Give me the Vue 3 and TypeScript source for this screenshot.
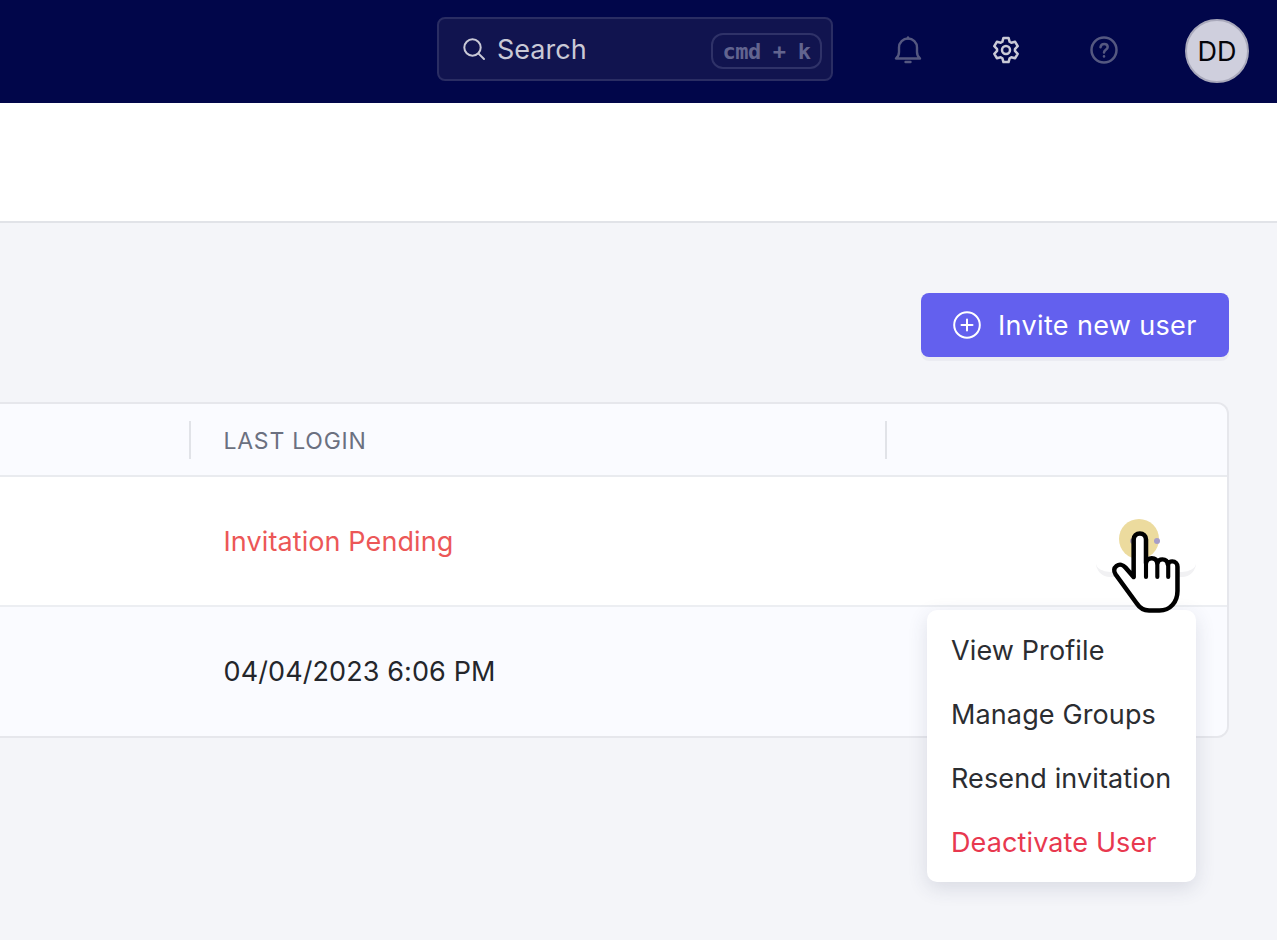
<script setup lang="ts">
const menu: { label: string; danger?: boolean }[] = [
  { label: 'View Profile' },
  { label: 'Manage Groups' },
  { label: 'Resend invitation' },
  { label: 'Deactivate User', danger: true },
]
</script>

<template>
  <div class="page">
    <header class="topbar">
      <div class="search">
        <svg class="search-icon" viewBox="0 0 24 24" fill="none" stroke="currentColor" stroke-width="2" stroke-linecap="round"><circle cx="10.5" cy="10.5" r="8.2" /><path d="M16.6 16.6L22 22" /></svg>
        <span class="search-label">Search</span>
        <kbd class="kbd">cmd + k</kbd>
      </div>
      <div class="icons">
        <svg class="icon dim" viewBox="0 0 28 28" fill="none" stroke="currentColor" stroke-width="2.4" stroke-linecap="round" stroke-linejoin="round"><path d="M2 22.5h24c-2.2-1.6-3-3.6-3-6.5v-4.5a9 9 0 0 0-18 0V16c0 2.900-.8 4.900-3 6.500z" /><path d="M11.500 26h5" /><path d="M14 1.500v1" /></svg>
        <svg class="icon bright" viewBox="0 0 28 28" fill="none" stroke="currentColor" stroke-width="2.500" stroke-linecap="round" stroke-linejoin="round"><path d="M10.340 5.780L11.440 1.970H16.560L17.660 5.780L19.290 6.720L23.140 5.770L25.700 10.200L22.950 13.060V14.940L25.700 17.800L23.140 22.230L19.290 21.280L17.660 22.220L16.560 26.030H11.440L10.340 22.220L8.710 21.280L4.860 22.230L2.300 17.800L5.050 14.940V13.060L2.300 10.200L4.860 5.770L8.710 6.720z" /><circle cx="14" cy="14" r="4" /></svg>
        <svg class="icon dim" viewBox="0 0 28 28" fill="none" stroke="currentColor" stroke-width="2.500" stroke-linecap="round" stroke-linejoin="round"><circle cx="14" cy="14" r="12.500" /><path d="M10.500 11.200c.3-2 1.800-3.200 3.700-3.200 2 0 3.500 1.300 3.500 3 0 2.700-3.700 2.800-3.700 5.500" /><path d="M14 20.300v.2" /></svg>
      </div>
      <div class="avatar">DD</div>
    </header>

    <div class="subbar"></div>

    <main class="content">
      <div class="actions">
        <button class="invite" type="button">
          <svg class="invite-icon" viewBox="0 0 28 28" fill="none" stroke="currentColor" stroke-width="2" stroke-linecap="round"><circle cx="14" cy="14" r="12.800" /><path d="M14 8.500v11M8.500 14h11" /></svg>
          <span>Invite new user</span>
        </button>
      </div>

      <div class="table-wrap">
        <div class="table">
          <div class="row head">
            <div class="cell first"></div>
            <div class="cell login"><span class="divider"></span>LAST LOGIN</div>
            <div class="cell action"><span class="divider"></span></div>
          </div>
          <div class="row body white">
            <div class="cell first"></div>
            <div class="cell login pending">Invitation Pending</div>
            <div class="cell action"></div>
          </div>
          <div class="row body tint">
            <div class="cell first"></div>
            <div class="cell login">04/04/2023 6:06 PM</div>
            <div class="cell action"></div>
          </div>
        </div>

        <div class="kebab">
          <span class="halo"></span>
          <span class="dot d1"></span>
          <span class="dot d2"></span>
          <span class="dot d3"></span>
        </div>

        <ul class="menu">
          <li v-for="item in menu" :key="item.label" :class="{ danger: item.danger }">{{ item.label }}</li>
        </ul>

        <svg class="cursor" viewBox="0 0 70 86" preserveAspectRatio="none" fill="none">
          <path d="M23 8.500c0-3.600 2.700-6 6-6s6 2.400 6 6V32c.4-3 2.900-4.800 5.600-4.800 2.900 0 5 1.900 5.400 4.800.7-2.300 2.800-3.600 5-3.600 2.800 0 4.800 1.900 5.200 4.700.8-1.700 2.500-2.700 4.300-2.700 3 0 5.100 2.300 5.100 5.300v24.300c0 11-7 19.500-17.500 19.500H38c-5.600 0-9.200-2.600-12.300-7.500L5.500 43.500c-2.300-3.500-1.500-6.700.8-8.500 2.900-2.200 6.300-1.400 8.700 1.500l8 9.500z" fill="#fff" stroke="#000" stroke-width="4.400" stroke-linejoin="round" />
          <path d="M35 32v14M46 32v14M56.600 33v13" stroke="#000" stroke-width="4" stroke-linecap="round" />
        </svg>
      </div>
    </main>
  </div>
</template>

<style scoped>
.page {
  display: flex;
  flex-direction: column;
  width: 1277px;
  height: 940px;
  overflow: hidden;
  background: #f4f5f9;
  font-family: Inter, "Liberation Sans", sans-serif;
  color: #24262b;
}
.topbar {
  flex: 0 0 103px;
  box-sizing: border-box;
  display: flex;
  align-items: center;
  justify-content: flex-end;
  padding: 0 28px 0 0;
  background: #01064a;
}
.search {
  box-sizing: border-box;
  display: flex;
  align-items: center;
  width: 396px;
  height: 64px;
  margin-top: -6px;
  padding: 0 9px 0 23px;
  background: #11144f;
  border: 2px solid #2a2d63;
  border-radius: 8px;
  color: #c9c9d6;
}
.search-icon { width: 24px; height: 24px; margin-right: 11px; }
.search-label { font-size: 27px; flex: 1; margin-top: 2px; }
.kbd {
  box-sizing: border-box;
  display: flex;
  align-items: center;
  justify-content: center;
  width: 111px;
  height: 36px;
  margin-top: 5px;
  border: 2px solid #2f3268;
  border-radius: 12px;
  color: #62648f;
  font-family: "DejaVu Sans Mono", "Liberation Mono", monospace;
  font-weight: 700;
  font-size: 22px;
  letter-spacing: -0.5px;
  word-spacing: -0.5px;
}
.icons {
  display: flex;
  align-items: center;
  gap: 70px;
  margin-left: 61px;
  margin-right: 67px;
  margin-top: -3px;
}
.icon { width: 28px; height: 28px; }
.dim { color: #555880; }
.bright { color: #c9c9d6; }
.avatar {
  box-sizing: border-box;
  width: 64px;
  height: 64px;
  margin-top: -1px;
  display: flex;
  align-items: center;
  justify-content: center;
  border-radius: 50%;
  background: #cfcfdd;
  border: 2px solid #a9a9bb;
  color: #05050a;
  font-size: 27px;
}
.subbar {
  flex: 0 0 118px;
  background: #fff;
  border-bottom: 2px solid #e1e3e8;
}
.content {
  flex: 1;
  display: flex;
  flex-direction: column;
  padding: 70px 48px 0 0;
}
.actions { display: flex; justify-content: flex-end; margin-bottom: 45px; }
.invite {
  display: flex;
  align-items: center;
  gap: 17px;
  width: 308px;
  height: 64px;
  padding: 0 0 0 32px;
  border: 0;
  border-radius: 8px;
  background: #6360ee;
  color: #fff;
  font: 400 27px Inter, "Liberation Sans", sans-serif;
  letter-spacing: 0.35px;
  box-shadow: 0 4px 0 #ebecf2;
}
.invite-icon { width: 28px; height: 28px; }
.table-wrap { position: relative; }
.table {
  box-sizing: border-box;
  border: 2px solid #e6e7ec;
  border-left: 0;
  border-radius: 0 12px 12px 0;
  overflow: hidden;
  height: 336px;
}
.row { display: flex; box-sizing: border-box; }
.cell { display: flex; align-items: center; position: relative; box-sizing: border-box; }
.first { width: 190px; }
.login { width: 696px; padding-left: 33.5px; }
.action { flex: 1; }
.head {
  height: 73px;
  padding-top: 2px;
  background: #fafbff;
  color: #6b7080;
  font-size: 23px;
  font-weight: 400;
  letter-spacing: 0.75px;
  border-bottom: 2px solid #e9ebef;
}
.divider {
  position: absolute;
  left: -1px;
  top: 15px;
  width: 2px;
  height: 38px;
  background: #e1e3e8;
}
.body { font-size: 27px; letter-spacing: 0.1px; }
.white { background: #fff; border-bottom: 2px solid #eceef2; height: 130px; }
.tint { background: #fafbff; height: 129px; }
.pending { color: #ec5757; }
.kebab {
  position: absolute;
  left: 1096px;
  top: 116px;
  width: 100px;
  height: 54px;
  border-bottom: 5px solid #f1f1f3;
  border-radius: 0 0 14px 14px;
}
.halo {
  position: absolute;
  left: 23px;
  top: 1px;
  width: 40px;
  height: 40px;
  border-radius: 50%;
  background: #ecdb9e;
}
.dot { position: absolute; top: 20px; width: 6px; height: 6px; border-radius: 50%; }
.d1 { left: 34px; background: #a99aa8; }
.d2 { left: 47px; background: #b3a98f; width: 5px; height: 5px; }
.d3 { left: 58px; background: #a79ec8; }
.cursor {
  position: absolute;
  left: 1110px;
  top: 129px;
  width: 72px;
  height: 86px;
}
.menu {
  position: absolute;
  left: 927px;
  top: 208px;
  box-sizing: border-box;
  width: 269px;
  height: 272px;
  margin: 0;
  padding: 8px 0;
  list-style: none;
  background: #fff;
  border-radius: 10px;
  box-shadow: 0 6px 20px rgba(50, 55, 90, 0.14);
  font-size: 27px;
  letter-spacing: 0.12px;
  color: #2b2d31;
}
.menu li {
  display: flex;
  align-items: center;
  height: 64px;
  padding-left: 24px;
  white-space: nowrap;
}
.menu .danger { color: #e8384f; }
</style>
